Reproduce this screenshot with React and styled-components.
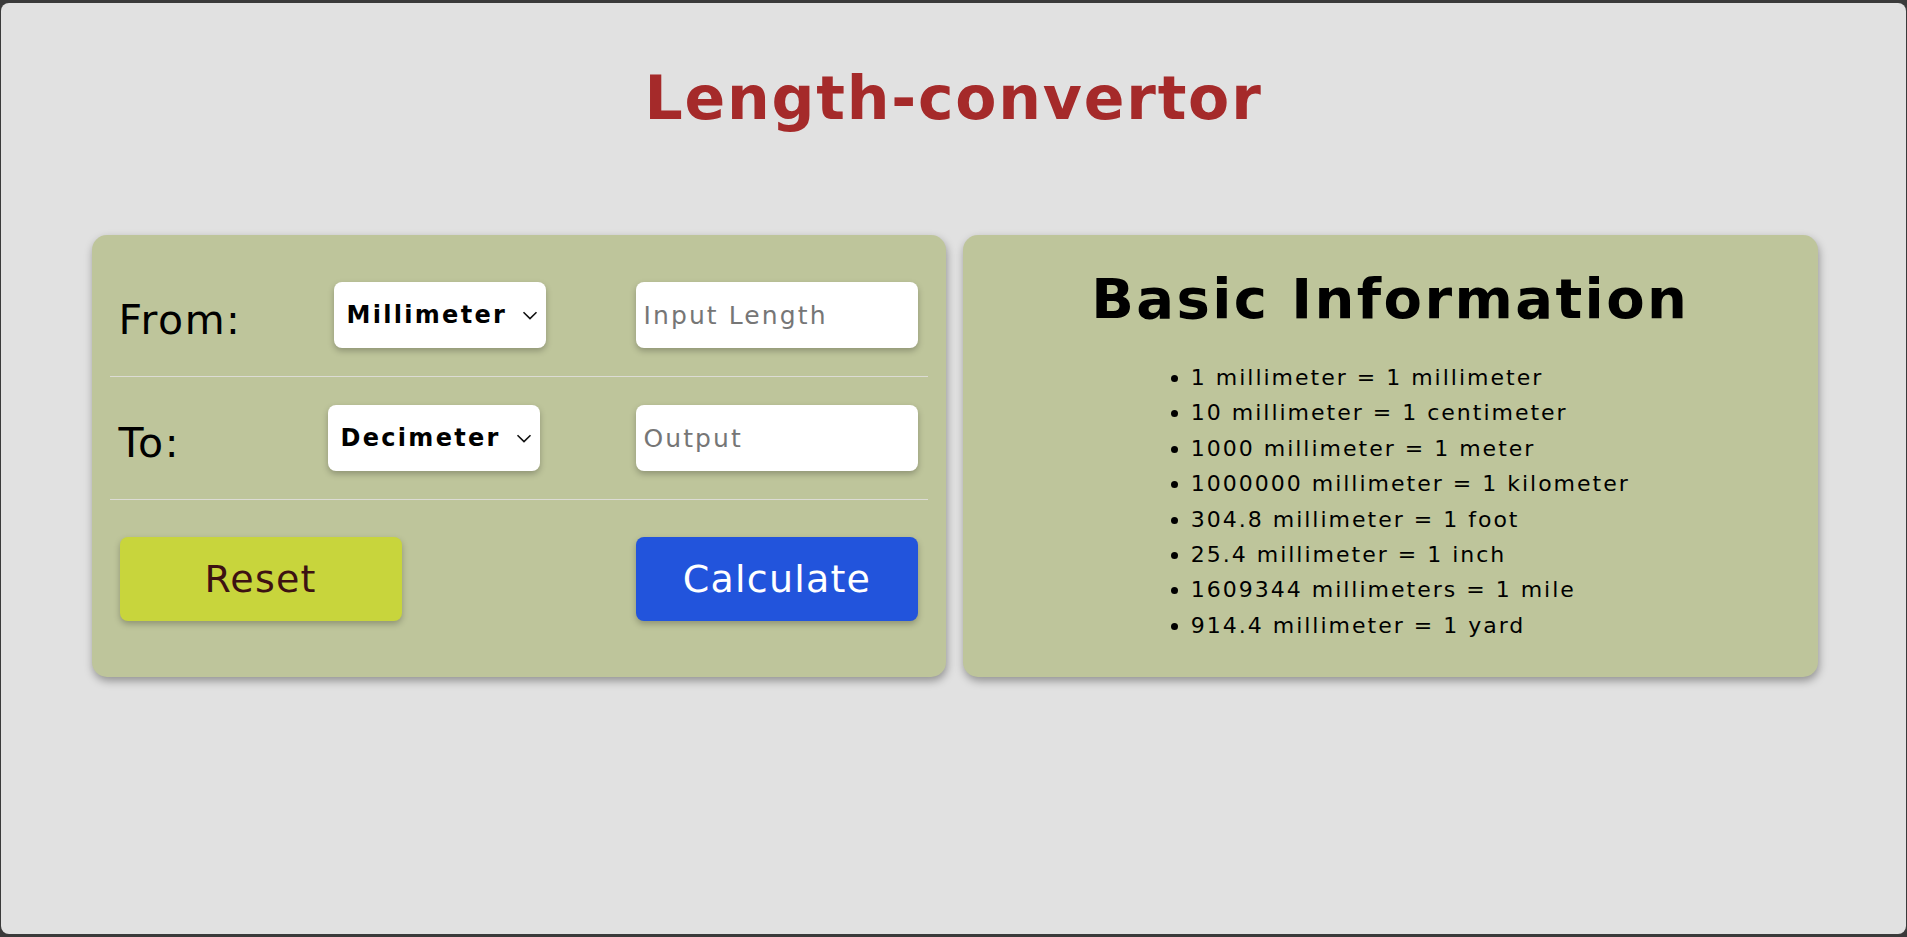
import React from 'react'
import styled, { createGlobalStyle } from 'styled-components'

const GlobalStyle = createGlobalStyle`
  html, body {
    margin: 0;
    background: #3a3a3a;
    font-family: "DejaVu Sans", Verdana, sans-serif;
  }
  * { box-sizing: border-box; }
`

const units = [
  '1 millimeter = 1 millimeter',
  '10 millimeter = 1 centimeter',
  '1000 millimeter = 1 meter',
  '1000000 millimeter = 1 kilometer',
  '304.8 millimeter = 1 foot',
  '25.4 millimeter = 1 inch',
  '1609344 millimeters = 1 mile',
  '914.4 millimeter = 1 yard',
]

const Chevron = () =>
  <ChevronIcon width="16" height="9" viewBox="0 0 16 9" fill="none">
    <path d="M1.5 1.2 L8 7.6 L14.5 1.2" stroke="#111" strokeWidth="1.6" />
  </ChevronIcon>

const Picker = ({ value, offset }) =>
  <SelectWrap $offset={offset}>
    <Select defaultValue={value}>
      <option>Millimeter</option>
      <option>Centimeter</option>
      <option>Decimeter</option>
      <option>Meter</option>
      <option>Kilometer</option>
    </Select>
    <Chevron />
  </SelectWrap>

export default () =>
  <>
    <GlobalStyle />
    <Page>
      <Title>Length-convertor</Title>

      <Cards>
        <Card>
          <Row>
            <Label>From:</Label>
            <Picker value="Millimeter" offset={0} />
            <Field placeholder="Input Length" />
          </Row>
          <Divider />
          <Row>
            <Label>To:</Label>
            <Picker value="Decimeter" offset={-6} />
            <Field placeholder="Output" readOnly />
          </Row>
          <Divider />
          <Actions>
            <Button $kind="reset">Reset</Button>
            <Button $kind="calc">Calculate</Button>
          </Actions>
        </Card>

        <InfoCard>
          <Heading>Basic Information</Heading>
          <List>
            {units.map(u => <li key={u}>{u}</li>)}
          </List>
        </InfoCard>
      </Cards>
    </Page>
  </>

const Page = styled.div`
  margin: 3px 1px;
  height: calc(100vh - 6px);
  background: #e1e1e1;
  border-radius: 8px;
  overflow: hidden;
`

const Title = styled.h1`
  margin: 60px 0 0;
  text-align: center;
  color: #a52a2a;
  font-size: 60px;
  font-weight: bold;
  letter-spacing: 1.8px;
  line-height: normal;
`

const Cards = styled.div`
  display: flex;
  gap: 17px;
  width: 1728px;
  padding-left: 2px;
  margin: 102px auto 0;
`

const Card = styled.div`
  flex: 1;
  background: #bec59b;
  border-radius: 15px;
  box-shadow: 1px 4px 8px rgba(0, 0, 0, 0.35);
  padding: 19px 18px 0;
`

const InfoCard = styled(Card)`
  padding: 31px 18px 0;
  display: flex;
  flex-direction: column;
  align-items: center;
`

const Row = styled.div`
  display: grid;
  grid-template-columns: 215px 302px 1fr;
  align-items: center;
  padding: 28px 10px 28px 9px;
`

const Label = styled.span`
  font-size: 41px;
  letter-spacing: 1.5px;
  color: #000;
  margin-top: 10px;
`

const SelectWrap = styled.div`
  position: relative;
  width: 212px;
  height: 66px;
  margin-left: ${p => p.$offset}px;
`

const Select = styled.select`
  appearance: none;
  width: 100%;
  height: 100%;
  border: none;
  border-radius: 8px;
  background: #fff;
  box-shadow: 0 3px 6px rgba(0, 0, 0, 0.25);
  padding: 0 30px 0 13px;
  font-family: inherit;
  font-size: 24px;
  font-weight: bold;
  letter-spacing: 2.3px;
  color: #000;
  outline: none;
`

const ChevronIcon = styled.svg`
  position: absolute;
  right: 8px;
  top: 29px;
  pointer-events: none;
`

const Field = styled.input`
  width: 282px;
  height: 66px;
  border: none;
  border-radius: 8px;
  background: #fff;
  box-shadow: 0 3px 6px rgba(0, 0, 0, 0.25);
  padding: 0 8px;
  font-family: inherit;
  font-size: 25px;
  letter-spacing: 2.1px;
  color: #000;
  outline: none;
  &::placeholder {
    color: #767676;
  }
`

const Divider = styled.hr`
  margin: 0;
  border: none;
  border-top: 1px solid #dcdcd4;
`

const Actions = styled.div`
  display: flex;
  justify-content: space-between;
  padding: 37px 10px 56px 10px;
`

const Button = styled.button`
  width: 282px;
  height: 84px;
  border: none;
  border-radius: 8px;
  font-family: inherit;
  font-size: 38px;
  letter-spacing: 1.2px;
  cursor: pointer;
  background: ${p => p.$kind === 'reset' ? '#c8d53c' : '#2254dc'};
  color: ${p => p.$kind === 'reset' ? '#3d1212' : '#fff'};
  box-shadow: 0 3px 6px rgba(0, 0, 0, 0.25);
`

const Heading = styled.h2`
  margin: 0;
  font-size: 56px;
  font-weight: bold;
  letter-spacing: 2.4px;
  line-height: normal;
  color: #000;
`

const List = styled.ul`
  margin: 29px 0 0;
  padding-left: 40px;
  font-size: 22px;
  letter-spacing: 2px;
  line-height: 35.4px;
  color: #000;
`
